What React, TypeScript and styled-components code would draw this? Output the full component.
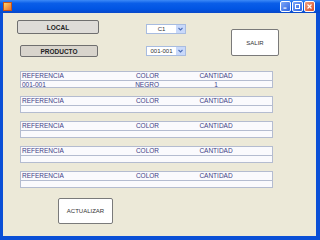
import styled, { createGlobalStyle } from 'styled-components'

const Global = createGlobalStyle`
  html, body { margin: 0; padding: 0; }
  body { width: 320px; height: 240px; overflow: hidden; background: #0a4fd6; }
`

const Window = styled.div`
  width: 320px;
  height: 240px;
  display: flex;
  flex-direction: column;
  font-family: 'Liberation Sans', Arial, sans-serif;
`

const TitleBar = styled.div`
  height: 13px;
  flex: none;
  display: flex;
  align-items: center;
  padding: 0 5px 0 3px;
  background: linear-gradient(#3d8af7 0%, #0a5ee8 25%, #0054e3 70%, #0a48c8 100%);
`

const AppIcon = styled.div`
  width: 7px;
  height: 7px;
  background: linear-gradient(135deg, #ffd36a, #e8702a);
  border: 1px solid #c4541a;
`

const Spacer = styled.div`
  flex: 1;
`

const Ctrl = styled.div<{ $close?: boolean }>`
  width: 9px;
  height: 9px;
  margin-left: 1px;
  border: 1px solid #fff;
  border-radius: 2px;
  background: ${p => (p.$close ? 'linear-gradient(135deg,#f0a080,#d8502a)' : 'linear-gradient(135deg,#7fa8f8,#2a62e0)')};
  display: flex;
  align-items: center;
  justify-content: center;
`

const Body = styled.div`
  flex: 1;
  background: #ece9d8;
  border-left: 3px solid #0a4fd6;
  border-right: 4px solid #0a4fd6;
  border-bottom: 4px solid #0a4fd6;
  display: flex;
  flex-direction: column;
`

const TopRow = styled.div`
  height: 58px;
  flex: none;
  display: flex;
  padding-top: 7px;
  box-sizing: border-box;
`

const LeftCol = styled.div`
  margin-left: 14px;
  width: 82px;
  display: flex;
  flex-direction: column;
  gap: 11px;
`

const Btn = styled.div<{ $w: number; $h: number; $dark?: boolean; $ml?: number }>`
  width: ${p => p.$w}px;
  height: ${p => p.$h}px;
  margin-left: ${p => p.$ml || 0}px;
  box-sizing: border-box;
  border: 1px solid #6f6f6f;
  border-radius: 2px;
  background: ${p => (p.$dark ? '#d8d4cc' : '#dedcd8')};
  display: flex;
  align-items: center;
  justify-content: center;
  font-size: 6.5px;
  font-weight: bold;
  color: #222;
`

const ComboCol = styled.div`
  margin-left: 47px;
  width: 40px;
  padding-top: 4px;
  display: flex;
  flex-direction: column;
  gap: 12px;
`

const Combo = styled.div`
  height: 10px;
  box-sizing: border-box;
  border: 1px solid #a8bce0;
  background: #fff;
  display: flex;
  font-size: 6px;
  color: #333;
`

const ComboText = styled.div`
  flex: 1;
  display: flex;
  align-items: center;
  justify-content: center;
`

const ComboArrow = styled.div`
  width: 9px;
  background: #c9d9fa;
  display: flex;
  align-items: center;
  justify-content: center;
`

const WhiteBtn = styled.div<{ $w: number; $h: number }>`
  width: ${p => p.$w}px;
  height: ${p => p.$h}px;
  box-sizing: border-box;
  border: 1px solid #7a7a7a;
  border-radius: 2px;
  background: #fff;
  display: flex;
  align-items: center;
  justify-content: center;
  font-size: 6px;
  color: #333;
`

const SalirWrap = styled.div`
  margin-left: 45px;
  margin-top: 9px;
`

const GridList = styled.div`
  margin-left: 17px;
  width: 253px;
  display: flex;
  flex-direction: column;
  gap: 8px;
`

const Grid = styled.div`
  height: 17px;
  box-sizing: border-box;
  border: 1px solid #b4bcd0;
  background: #fafafd;
  display: flex;
  flex-direction: column;
`

const Row = styled.div<{ $head?: boolean }>`
  height: 8px;
  display: grid;
  grid-template-columns: 100px 38px 1fr;
  align-items: center;
  font-size: 6.5px;
  color: #3e3e86;
  border-bottom: ${p => (p.$head ? '1px solid #b4bcd0' : 'none')};
`

const Cell = styled.div<{ $align: string }>`
  text-align: ${p => p.$align};
  padding-left: 1px;
  white-space: nowrap;
  line-height: 8px;
`

const BottomWrap = styled.div`
  margin-left: 55px;
  margin-top: 10px;
`

const Chevron = () => (
  <svg width="5" height="4" viewBox="0 0 5 4">
    <path d="M0.5 1 L2.5 3 L4.5 1" stroke="#4d6fb8" strokeWidth="1.1" fill="none" />
  </svg>
)

const rows = [
  { ref: '001-001', color: 'NEGRO', qty: '1' },
  null,
  null,
  null,
  null,
]

export default function App() {
  return (
    <>
      <Global />
      <Window>
        <TitleBar>
          <AppIcon />
          <Spacer />
          <Ctrl>
            <svg width="5" height="5" viewBox="0 0 5 5"><rect x="0.5" y="3.5" width="3" height="1.2" fill="#fff" /></svg>
          </Ctrl>
          <Ctrl>
            <svg width="5" height="5" viewBox="0 0 5 5"><rect x="0.5" y="0.5" width="4" height="4" stroke="#fff" strokeWidth="1" fill="none" /></svg>
          </Ctrl>
          <Ctrl $close>
            <svg width="5" height="5" viewBox="0 0 5 5"><path d="M0.5 0.5 L4.5 4.5 M4.5 0.5 L0.5 4.5" stroke="#fff" strokeWidth="1.2" /></svg>
          </Ctrl>
        </TitleBar>
        <Body>
          <TopRow>
            <LeftCol>
              <Btn $w={82} $h={14}>LOCAL</Btn>
              <Btn $w={78} $h={12} $ml={3} $dark>PRODUCTO</Btn>
            </LeftCol>
            <ComboCol>
              <Combo>
                <ComboText>C1</ComboText>
                <ComboArrow><Chevron /></ComboArrow>
              </Combo>
              <Combo>
                <ComboText>001-001</ComboText>
                <ComboArrow><Chevron /></ComboArrow>
              </Combo>
            </ComboCol>
            <SalirWrap>
              <WhiteBtn $w={48} $h={27}>SALIR</WhiteBtn>
            </SalirWrap>
          </TopRow>
          <GridList>
            {rows.map((r, i) => (
              <Grid key={i}>
                <Row $head>
                  <Cell $align="left">REFERENCIA</Cell>
                  <Cell $align="right">COLOR</Cell>
                  <Cell $align="center">CANTIDAD</Cell>
                </Row>
                <Row>
                  <Cell $align="left">{r ? r.ref : ''}</Cell>
                  <Cell $align="right">{r ? r.color : ''}</Cell>
                  <Cell $align="center">{r ? r.qty : ''}</Cell>
                </Row>
              </Grid>
            ))}
          </GridList>
          <BottomWrap>
            <WhiteBtn $w={55} $h={26}>ACTUALIZAR</WhiteBtn>
          </BottomWrap>
        </Body>
      </Window>
    </>
  )
}
